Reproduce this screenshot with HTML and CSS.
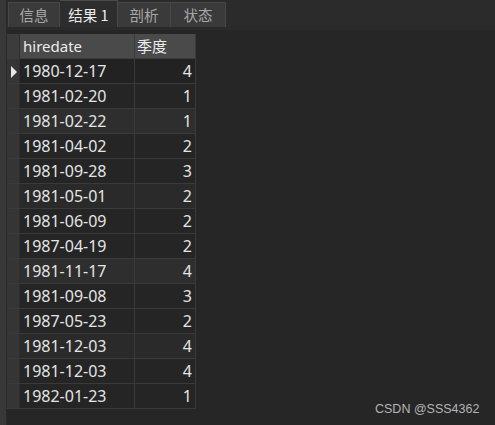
FILE: index.html
```html
<!DOCTYPE html>
<html>
<head>
<meta charset="utf-8">
<link rel="stylesheet" href="styles.css">
</head>
<body>
<div class="app">
  <div class="side"></div>
  <div class="main">
    <div class="tabbar">
      <div class="tab t1">信息</div>
      <div class="tab active t2">结果&nbsp;1</div>
      <div class="tab t3">剖析</div>
      <div class="tab t4">状态</div>
    </div>
    <div class="grid">
      <div class="row head">
        <div class="cell ind"></div>
        <div class="cell date">hiredate</div>
        <div class="cell q qh">季度</div>
      </div>
      <div class="row cur"><div class="cell ind"><span class="arrow"></span></div><div class="cell date">1980-12-17</div><div class="cell q">4</div></div>
      <div class="row"><div class="cell ind"></div><div class="cell date">1981-02-20</div><div class="cell q">1</div></div>
      <div class="row hl"><div class="cell ind"></div><div class="cell date">1981-02-22</div><div class="cell q">1</div></div>
      <div class="row"><div class="cell ind"></div><div class="cell date">1981-04-02</div><div class="cell q">2</div></div>
      <div class="row"><div class="cell ind"></div><div class="cell date">1981-09-28</div><div class="cell q">3</div></div>
      <div class="row hl2"><div class="cell ind"></div><div class="cell date">1981-05-01</div><div class="cell q">2</div></div>
      <div class="row"><div class="cell ind"></div><div class="cell date">1981-06-09</div><div class="cell q">2</div></div>
      <div class="row"><div class="cell ind"></div><div class="cell date">1987-04-19</div><div class="cell q">2</div></div>
      <div class="row hl"><div class="cell ind"></div><div class="cell date">1981-11-17</div><div class="cell q">4</div></div>
      <div class="row"><div class="cell ind"></div><div class="cell date">1981-09-08</div><div class="cell q">3</div></div>
      <div class="row"><div class="cell ind"></div><div class="cell date">1987-05-23</div><div class="cell q">2</div></div>
      <div class="row hl2"><div class="cell ind"></div><div class="cell date">1981-12-03</div><div class="cell q">4</div></div>
      <div class="row"><div class="cell ind"></div><div class="cell date">1981-12-03</div><div class="cell q">4</div></div>
      <div class="row"><div class="cell ind"></div><div class="cell date">1982-01-23</div><div class="cell q">1</div></div>
    </div>
  </div>
</div>
<div class="watermark">CSDN @SSS4362</div>
</body>
</html>
```
FILE: styles.css
```css
html, body {
  margin: 0;
  padding: 0;
  background: #262626;
  width: 495px;
  height: 425px;
  overflow: hidden;
  font-family: "Noto Sans", "Noto Sans CJK SC", sans-serif;
}
.app {
  display: flex;
  height: 425px;
}
.side {
  width: 6px;
  background: #383838;
  border-right: 1px solid #2a2a2a;
  flex: none;
}
.main {
  flex: 1;
  display: flex;
  flex-direction: column;
}
.tabbar {
  height: 27px;
  display: flex;
  align-items: flex-end;
  padding-left: 1px;
  background: #2b2b2b;
  border-bottom: 3px solid #2a2a2a;
}
.tab {
  box-sizing: border-box;
  height: 25px;
  background: #3a3a3a;
  border: 1px solid #474747;
  border-bottom: none;
  color: #a8a8a8;
  font-family: "Noto Sans CJK SC", sans-serif;
  font-size: 14.5px;
  line-height: 24px;
  text-align: center;
}
.tab + .tab { border-left: none; }
.t1 { width: 52px; }
.t2 { width: 58px; }
.t3 { width: 53px; }
.t4 { width: 55px; }
.tab.active {
  height: 27px;
  line-height: 27px;
  background: #2d2d2d;
  color: #ececec;
  border-color: #4a4a4a;
}
.grid {
  margin-top: 4px;
  display: flex;
  flex-direction: column;
  align-items: flex-start;
}
.row {
  display: flex;
  height: 24px;
  border-bottom: 1px solid #3a3a3a;
  background: #252525;
}
.row.head {
  background: #4a4a4a;
  border-bottom: 1px solid #3c3c3c;
}
.row.cur { background: #222222; }
.row.hl { background: #2e2e2e; }
.row.hl2 { background: #2a2a2a; }
.cell {
  box-sizing: border-box;
  height: 24px;
  line-height: 24px;
  color: #e4e4e4;
  font-size: 16px;
  border-right: 1px solid #3a3a3a;
  white-space: nowrap;
}
.ind {
  width: 13px;
  background: #353535;
  border-right: 1px solid #2e2e2e;
  position: relative;
}
.head .ind { background: #3c3c3c; }
.date {
  width: 115px;
  padding-left: 3px;
}
.head .date {
  font-size: 15px;
  color: #ececec;
}
.q {
  width: 61px;
  text-align: right;
  padding-right: 3px;
}
.q.qh {
  text-align: left;
  padding-left: 2px;
  font-family: "Noto Sans CJK SC", sans-serif;
  font-size: 15px;
  color: #ececec;
}
.arrow {
  position: absolute;
  left: 4px;
  top: 7px;
  width: 0;
  height: 0;
  border-top: 6px solid transparent;
  border-bottom: 6px solid transparent;
  border-left: 6px solid #e8e8e8;
}
.watermark {
  position: absolute;
  left: 375px;
  top: 402px;
  font-family: "Liberation Sans", sans-serif;
  font-size: 12.5px;
  color: #b4b4b4;
}
```
